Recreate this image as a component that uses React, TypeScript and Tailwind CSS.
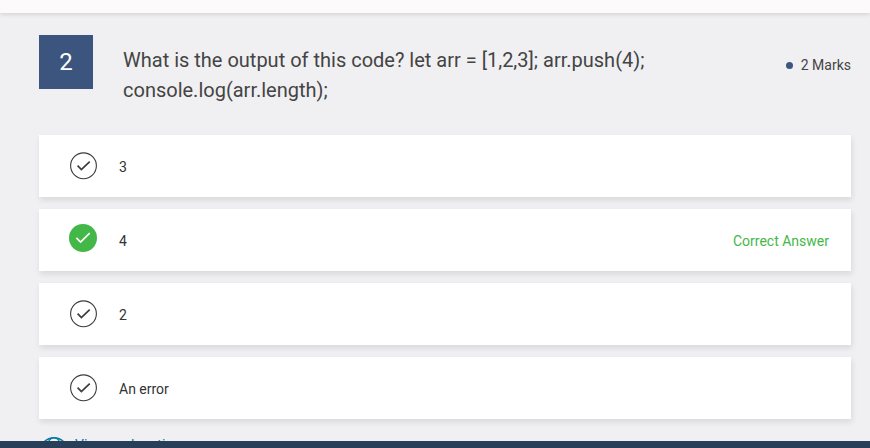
type Option = { label: string; correct?: boolean };

const options: Option[] = [
  { label: "3" },
  { label: "4", correct: true },
  { label: "2" },
  { label: "An error" },
];

function CheckMark({ correct }: { correct?: boolean }) {
  if (correct) {
    return (
      <svg className="-mt-1 block h-8 w-8 shrink-0" viewBox="0 0 32 32" fill="none">
        <circle cx="16" cy="16" r="14" fill="#43b848" />
        <path d="M9.4 15.9L13.6 20.1L22.7 11.2" stroke="#fff" strokeWidth="1.7" />
      </svg>
    );
  }
  return (
    <svg className="block h-8 w-8 shrink-0" viewBox="0 0 32 32" fill="none" stroke="#3c3c3c">
      <circle cx="16.5" cy="15.8" r="12.9" strokeWidth="1.1" />
      <path d="M10.6 15.7L14.4 19.6L22.7 11.6" strokeWidth="1.7" />
    </svg>
  );
}

function OptionRow({ label, correct }: Option) {
  return (
    <div className="flex h-[62px] items-center bg-white pr-[22px] pl-7 text-sm text-[#333] shadow-[1px_3px_6px_rgba(0,0,0,0.1)]">
      <CheckMark correct={correct} />
      <span className="ml-5 pt-px">{label}</span>
      {correct && <span className="ml-auto pt-px text-[#43b848]">Correct Answer</span>}
    </div>
  );
}

export default function App() {
  return (
    <div className="flex h-[448px] w-[870px] flex-col overflow-hidden bg-[#f0f0f2] font-['Roboto',sans-serif] text-[#444]">
      <header className="h-[13px] shrink-0 bg-[#fcfafb] shadow-[0_1px_5px_rgba(0,0,0,0.14)]" />
      <main className="min-h-0 flex-1 overflow-hidden pt-[22px] pr-[19px] pl-[39px]">
        <div className="flex h-[100px] items-start">
          <div className="flex h-[54px] w-[54px] shrink-0 items-center justify-center bg-[#3b557f] text-2xl text-white">
            2
          </div>
          <h1 className="mt-[10px] ml-[30px] w-[560px] text-xl leading-[30px] font-normal">
            What is the output of this code? let arr = [1,2,3]; arr.push(4); console.log(arr.length);
          </h1>
          <div className="mt-5 ml-auto flex items-center gap-2 text-sm">
            <span className="h-[7px] w-[7px] rounded-full bg-[#3b557f]" />
            <span>2 Marks</span>
          </div>
        </div>
        <div className="flex flex-col gap-3">
          {options.map((option) => (
            <OptionRow key={option.label} {...option} />
          ))}
        </div>
        <div className="mt-4 flex items-start text-sm leading-5 text-[#087ba5]">
          <svg className="mt-[2px] block h-[30px] w-[30px]" viewBox="0 0 30 30" fill="none" stroke="currentColor">
            <circle cx="15" cy="14.5" r="13.8" strokeWidth="1.4" />
            <ellipse cx="15" cy="14.5" rx="8" ry="13.8" strokeWidth="1.2" />
            <path d="M1 14.5H29M4 6H26M4 23H26" />
          </svg>
          <span className="ml-[6px]">View explanation</span>
        </div>
      </main>
      <footer className="h-[7px] shrink-0 bg-[#293e58]" />
    </div>
  );
}
